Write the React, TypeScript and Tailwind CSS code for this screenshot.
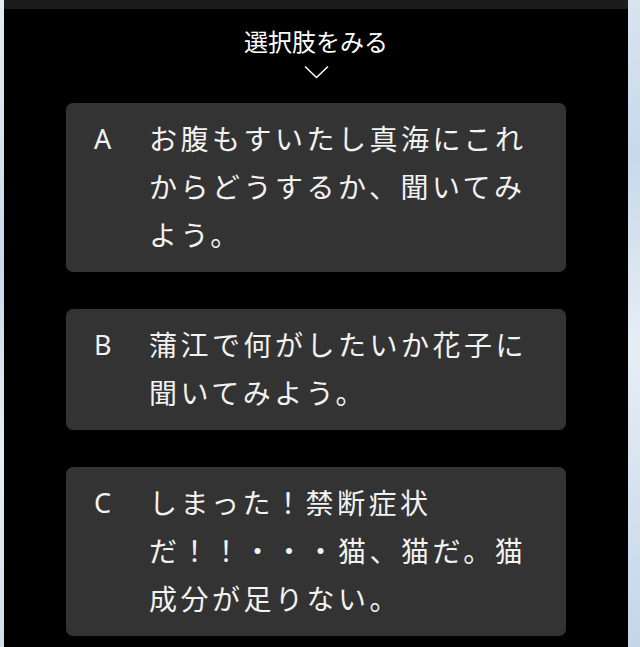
import React from "react";

type Choice = {
  key: string;
  text: string;
};

const choices: Choice[] = [
  { key: "A", text: "お腹もすいたし真海にこれからどうするか、聞いてみよう。" },
  { key: "B", text: "蒲江で何がしたいか花子に聞いてみよう。" },
  { key: "C", text: "しまった！禁断症状だ！！・・・猫、猫だ。猫成分が足りない。" },
];

function ChoiceCard({ choice }: { choice: Choice }) {
  return (
    <div className="mx-auto flex w-[500px] items-start rounded-[7px] bg-[#333333] pt-3 pb-[13px] pl-[28px] text-[#f2f2f2]">
      <span className="w-[55px] shrink-0 text-[27px] leading-[48px]">{choice.key}</span>
      <p className="w-[385px] text-[28px] leading-[48px] tracking-[3.5px]">{choice.text}</p>
    </div>
  );
}

export default function App() {
  return (
    <div
      lang="ja"
      className="flex min-h-[647px] w-full bg-[#d4e1ee] bg-[linear-gradient(170deg,#e4ecf4_0%,#c8d9ea_35%,#e6eef5_60%,#c3d5e8_100%)] font-['Noto_Sans','Noto_Sans_CJK_JP',sans-serif]"
    >
      <div className="ml-[4px] flex w-[624px] flex-col bg-black pb-4">
        <div className="h-[9px] w-full bg-[#1c1c1c]" />

        <div className="mt-[17px] flex flex-col items-center">
          <h2 className="text-[24px] leading-[32px] text-white">選択肢をみる</h2>
          <svg
            className="mt-[7px]"
            width="25"
            height="14"
            viewBox="0 0 25 14"
            fill="none"
            stroke="white"
            strokeWidth="1.5"
          >
            <path d="M1 1.5 L12.5 12.5 L24 1.5" />
          </svg>
        </div>

        <div className="mt-[24px] flex flex-col gap-[37px]">
          {choices.map((choice) => (
            <ChoiceCard key={choice.key} choice={choice} />
          ))}
        </div>
      </div>
    </div>
  );
}
